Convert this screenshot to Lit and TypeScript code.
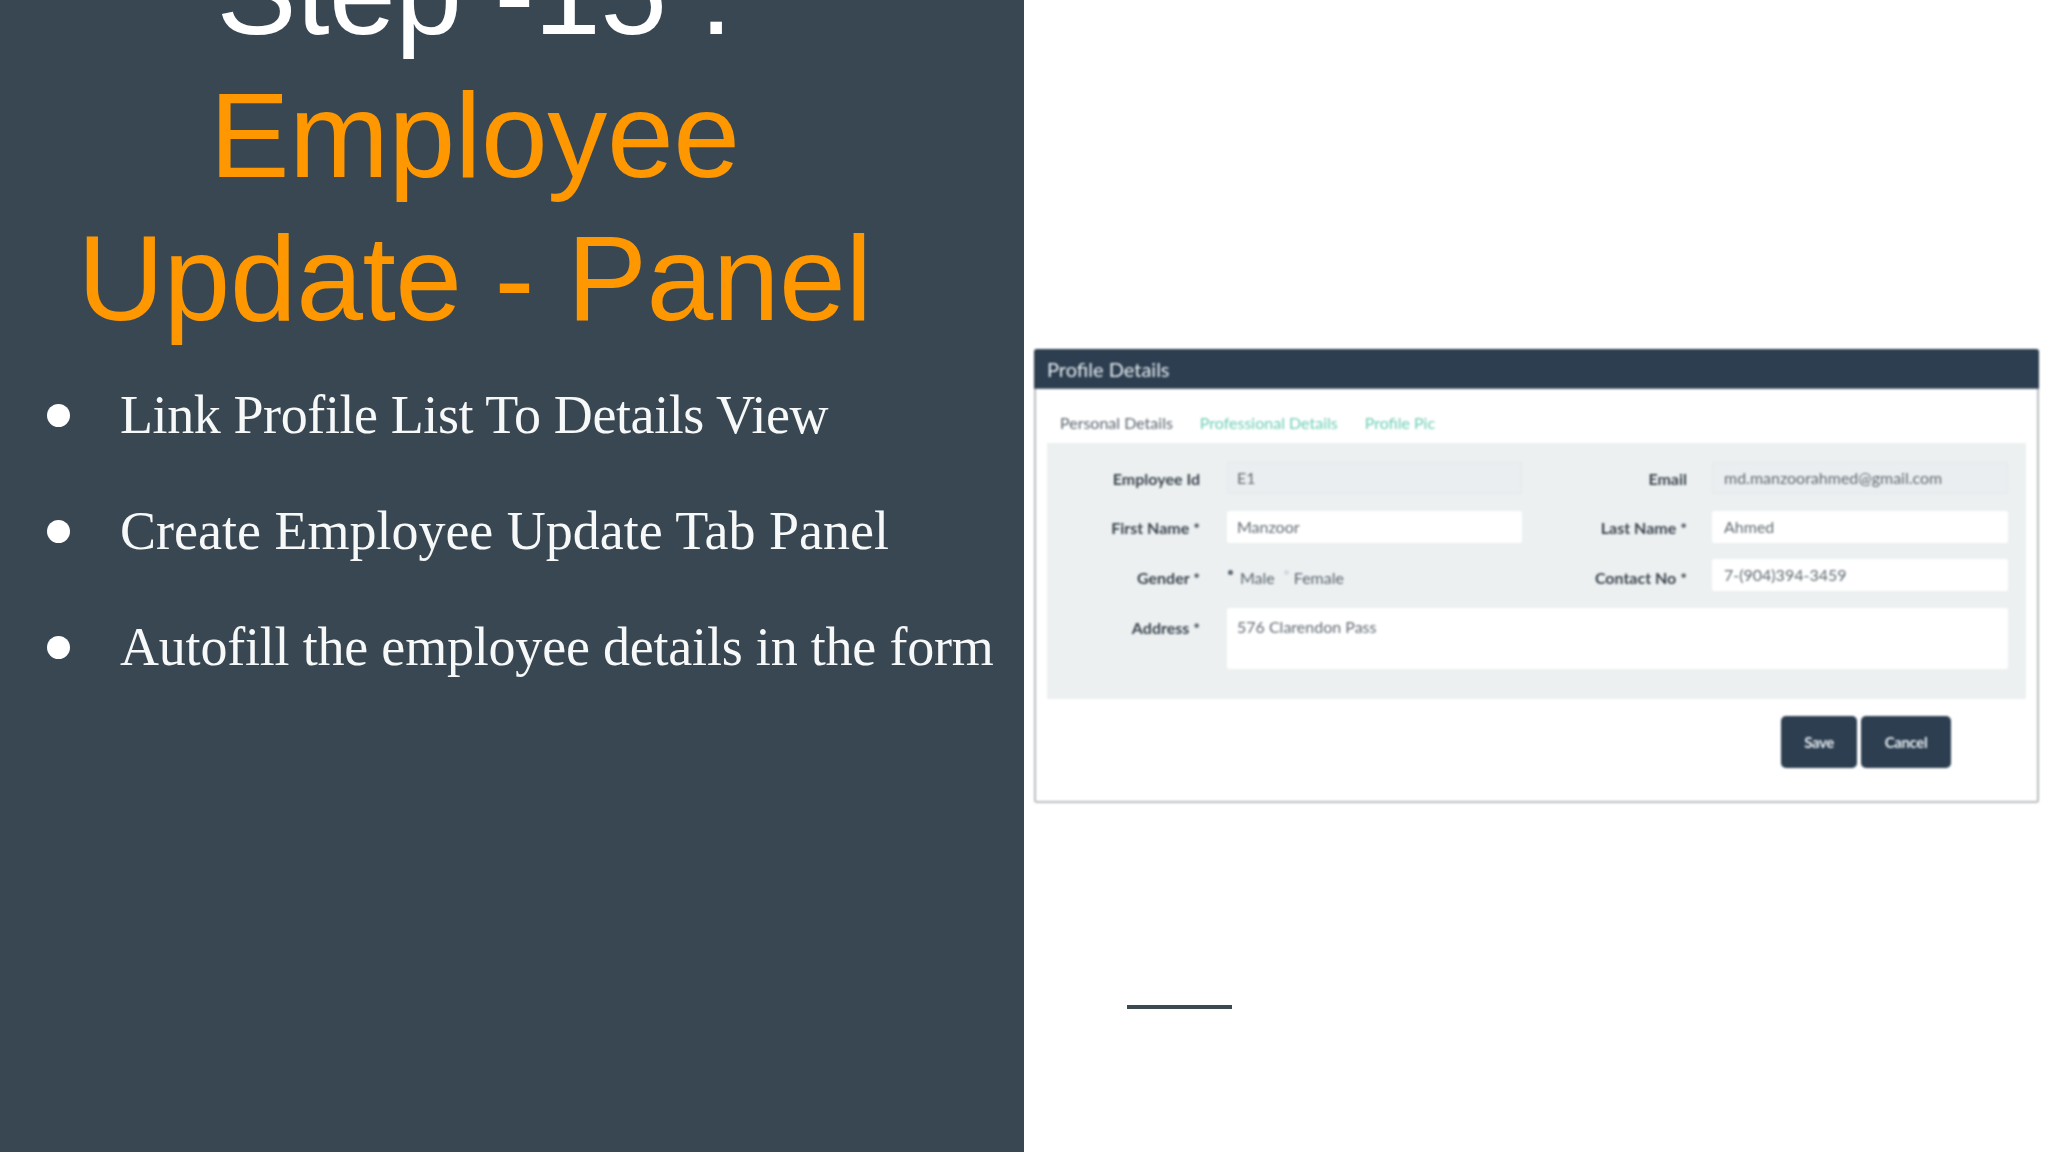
import { LitElement, html, css } from "lit";
import { customElement } from "lit/decorators.js";

@customElement("app-root")
export class AppRoot extends LitElement {
  static styles = css`
    :host { display: block; width: 2048px; height: 1152px; overflow: hidden; background: #fff; }
    .slide { display: flex; width: 2048px; height: 1152px; }
    .left { width: 1024px; height: 1152px; background: #384752; flex: none; overflow: hidden; }
    .title {
      margin: -79px 75px 7px 0; text-align: center; font-weight: 400; letter-spacing: -0.45px;
      font: 120px/143px "Liberation Sans", Arial, sans-serif; color: #ff9800;
    }
    .title span { display: block; }
    .title .white { color: #fff; }
    .bullets { list-style: none; margin: 0; padding: 0 0 0 47px; }
    .bullets li {
      display: flex; align-items: center; gap: 50px; height: 116px;
      font: 54px/116px "Liberation Serif", "Times New Roman", serif; color: #f7f8f8;
      white-space: nowrap; letter-spacing: -0.2px;
    }
    .bullets li:nth-child(1) { letter-spacing: -0.4px; }
    .bullets li:nth-child(2) { letter-spacing: 0; }
    .dot { width: 23px; height: 23px; border-radius: 50%; background: #fff; flex: none; }
    .right { flex: 1; display: flex; flex-direction: column; padding: 349px 9px 0 10px; box-sizing: border-box; }
    .card {
      width: 1005px; height: 454px; box-sizing: border-box; border: 2px solid #b9bdc0; border-top: 0;
      border-radius: 3px; background: #fff; filter: blur(0.8px);
      font-family: Lato, sans-serif; color: #3c4650;
    }
    .head {
      margin: 0 -2px; height: 40px; background: #2c3e50; color: #e6ecf0; border-radius: 3px 3px 0 0;
      font: 20px/40px Lato, sans-serif; padding-left: 13px; border-bottom: 1px solid #5d6d7b;
      box-sizing: border-box;
    }
    .tabs { display: flex; gap: 27px; height: 54px; box-sizing: border-box; padding: 12px 0 0 24px; align-items: center; font-size: 16px; color: #5c6670; }
    .tabs .link { color: #6fcfb5; }
    .panel {
      margin: 0 11px; background: #ecf0f1; height: 256px; box-sizing: border-box;
      padding: 19px 18px 0 0; display: grid;
      grid-template-columns: 153px 322px 165px 321px;
      grid-template-rows: 32px 32px 32px 61px; row-gap: 16.5px;
    }
    .lbl { text-align: right; font-weight: 700; font-size: 16px; line-height: 34px; color: #3a444e; }
    .lbl.mid { line-height: 37px; }
    .lbl.low { line-height: 40px; }
    .f {
      height: 32px; box-sizing: border-box; background: #fff; border-radius: 2px; padding-left: 10px;
      font-size: 16px; line-height: 31px; color: #626b73;
    }
    .ctl { margin-left: 27px; }
    .ctl2 { margin-left: 25px; padding-left: 12px; }
    .ro { background: #eaeef0; border: 1px solid #e4e8ea; padding-left: 9px; line-height: 29px; }
    .ro.ctl2 { padding-left: 11px; }
    .addr { grid-column: 2 / 5; height: 61px; padding-top: 3px; }
    .gender { display: flex; align-items: center; gap: 7px; font-size: 16px; color: #5c6670; padding-top: 4px; margin-left: 27px; }
    .radio { width: 5px; height: 5px; border-radius: 50%; background: #5c6670; margin: -10px 0 0 1px; }
    .radio.off { background: #d5d9dc; margin-left: 2px; margin-right: -2px; }
    .actions { display: flex; justify-content: flex-end; gap: 4px; margin: 17px 86px 0 0; }
    .btn {
      height: 52px; border-radius: 5px; background: #2c3e50; color: #e6ecf0; font-size: 15px; line-height: 52px;
      text-align: center; font-weight: 700; letter-spacing: -0.4px;
    }
    .save { width: 76px; }
    .cancel { width: 90px; }
    .rule { margin: 202px 0 0 93px; width: 105px; height: 4px; background: #3b4a52; }
  `;

  render() {
    return html`
      <div class="slide">
        <section class="left">
          <h1 class="title">
            <span class="white">Step -15 :</span>
            <span>Employee</span>
            <span>Update - Panel</span>
          </h1>
          <ul class="bullets">
            <li><i class="dot"></i>Link Profile List To Details View</li>
            <li><i class="dot"></i>Create Employee Update Tab Panel</li>
            <li><i class="dot"></i>Autofill the employee details in the form</li>
          </ul>
        </section>
        <section class="right">
          <div class="card">
            <div class="head">Profile Details</div>
            <div class="tabs">
              <span>Personal Details</span>
              <span class="link">Professional Details</span>
              <span class="link">Profile Pic</span>
            </div>
            <div class="panel">
              <div class="lbl">Employee Id</div>
              <div class="f ro ctl">E1</div>
              <div class="lbl">Email</div>
              <div class="f ro ctl2">md.manzoorahmed@gmail.com</div>

              <div class="lbl">First Name *</div>
              <div class="f ctl">Manzoor</div>
              <div class="lbl">Last Name *</div>
              <div class="f ctl2">Ahmed</div>

              <div class="lbl mid">Gender *</div>
              <div class="gender"><i class="radio"></i>Male<i class="radio off"></i>Female</div>
              <div class="lbl mid">Contact No *</div>
              <div class="f ctl2">7-(904)394-3459</div>

              <div class="lbl low">Address *</div>
              <div class="f addr ctl">576 Clarendon Pass</div>
            </div>
            <div class="actions">
              <div class="btn save">Save</div>
              <div class="btn cancel">Cancel</div>
            </div>
          </div>
          <div class="rule"></div>
        </section>
      </div>
    `;
  }
}
